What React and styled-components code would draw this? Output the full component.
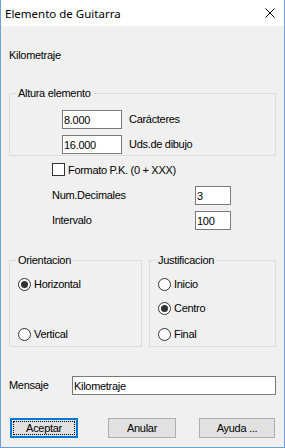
import React from 'react';
import styled, { createGlobalStyle } from 'styled-components';

const GlobalStyle = createGlobalStyle`
  html, body {
    margin: 0;
    padding: 0;
    background: #fff;
  }
  * {
    box-sizing: border-box;
  }
`;

const Window = styled.div`
  width: 285px;
  height: 448px;
  border: 1px solid #6f9fd8;
  border-top: none;
  background: #f0f0f0;
  display: flex;
  flex-direction: column;
  font-family: "Liberation Sans", Arial, sans-serif;
  font-size: 11px;
  letter-spacing: -0.3px;
  color: #000;
  overflow: hidden;
`;

const TitleBar = styled.div`
  height: 26px;
  flex-shrink: 0;
  background: #fff;
  display: flex;
  align-items: center;
  justify-content: space-between;
  padding: 0 9px 0 4px;
`;

const Title = styled.span`
  font-family: "Noto Sans", "Open Sans", sans-serif;
  font-size: 11.5px;
  letter-spacing: 0;
`;

const Body = styled.div`
  flex: 1;
  display: flex;
  flex-direction: column;
  padding: 23px 8px 0;
`;

const Label = styled.div`
  line-height: 13px;
  white-space: nowrap;
  margin-left: ${p => p.$ml || 0}px;
`;

const Group = styled.fieldset`
  margin: ${p => p.$mt || 0}px 0 0;
  padding: 0;
  border: 1px solid #dcdcdc;
  min-width: 0;
`;

const Legend = styled.legend`
  margin-left: 6px;
  padding: 0 2px;
  line-height: 14px;
`;

const GroupBody = styled.div`
  display: flex;
  flex-direction: column;
  padding: ${p => p.$pad};
`;

const FieldRow = styled.div`
  display: flex;
  align-items: center;
  gap: 7px;
  height: 19px;
  margin-top: ${p => p.$mt || 0}px;
`;

const TextBox = styled.input`
  width: ${p => p.$w}px;
  height: 19px;
  border: 1px solid #7a7a7a;
  background: #fff;
  padding: 0 1px;
  margin: 0;
  font: inherit;
  letter-spacing: inherit;
  color: #000;
  outline: none;
`;

const CheckRow = styled.label`
  display: flex;
  align-items: center;
  gap: 3px;
  height: 13px;
  margin: 7px 0 0 43px;
`;

const CheckBox = styled.span`
  width: 13px;
  height: 13px;
  border: 1px solid #333;
  background: #fff;
`;

const GridRow = styled.div`
  display: grid;
  grid-template-columns: ${p => p.$cols};
  align-items: center;
  height: 19px;
  margin-top: ${p => p.$mt || 0}px;
  padding-left: ${p => p.$pl || 0}px;
`;

const GroupPair = styled.div`
  display: grid;
  grid-template-columns: 133px 127px;
  gap: 7px;
  margin-top: 23px;
`;

const RadioRow = styled.label`
  display: flex;
  align-items: center;
  gap: 3px;
  height: 16px;
  margin-top: ${p => p.$mt || 0}px;
`;

const Radio = styled.span`
  width: 13px;
  height: 13px;
  border-radius: 50%;
  border: 1px solid #333;
  background: #fff;
  display: flex;
  align-items: center;
  justify-content: center;

  &::after {
    content: "";
    width: 7px;
    height: 7px;
    border-radius: 50%;
    background: ${p => (p.$checked ? '#333' : 'transparent')};
  }
`;

const ButtonRow = styled.div`
  display: flex;
  margin-top: 23px;
`;

const Button = styled.button`
  position: relative;
  width: ${p => p.$w}px;
  height: 20px;
  margin: 0 0 0 ${p => p.$ml}px;
  padding: 0;
  background: #e1e1e1;
  border: 1px solid ${p => (p.$default ? '#0078d7' : '#adadad')};
  box-shadow: ${p => (p.$default ? 'inset 0 0 0 1px #0078d7' : 'none')};
  font: inherit;
  letter-spacing: inherit;
  color: #000;

  &::after {
    content: "";
    display: ${p => (p.$default ? 'block' : 'none')};
    position: absolute;
    inset: 2px;
    border: 1px dotted #000;
  }
`;

const CloseIcon = () => (
  <svg width="10" height="10" viewBox="0 0 10 10">
    <path d="M0.5 0.5 L9.5 9.5 M9.5 0.5 L0.5 9.5" stroke="#000" strokeWidth="1" />
  </svg>
);

export default function App() {
  return (
    <>
      <GlobalStyle />
      <Window>
        <TitleBar>
          <Title>Elemento de Guitarra</Title>
          <CloseIcon />
        </TitleBar>
        <Body>
          <Label>Kilometraje</Label>

          <Group $mt={24}>
            <Legend>Altura elemento</Legend>
            <GroupBody $pad="10px 0 1px 52px">
              <FieldRow>
                <TextBox $w={60} defaultValue="8.000" />
                <Label>Carácteres</Label>
              </FieldRow>
              <FieldRow $mt={6}>
                <TextBox $w={60} defaultValue="16.000" />
                <Label>Uds.de dibujo</Label>
              </FieldRow>
            </GroupBody>
          </Group>

          <CheckRow>
            <CheckBox />
            <span>Formato P.K. (0 + XXX)</span>
          </CheckRow>

          <GridRow $cols="143px 36px" $pl={43} $mt={10}>
            <Label>Num.Decimales</Label>
            <TextBox $w={36} defaultValue="3" />
          </GridRow>
          <GridRow $cols="143px 36px" $pl={43} $mt={6}>
            <Label>Intervalo</Label>
            <TextBox $w={36} defaultValue="100" />
          </GridRow>

          <GroupPair>
            <Group>
              <Legend>Orientacion</Legend>
              <GroupBody $pad="0 0 4px 8px">
                <RadioRow $mt={9}>
                  <Radio $checked />
                  <span>Horizontal</span>
                </RadioRow>
                <RadioRow $mt={34}>
                  <Radio />
                  <span>Vertical</span>
                </RadioRow>
              </GroupBody>
            </Group>
            <Group>
              <Legend>Justificacion</Legend>
              <GroupBody $pad="0 0 4px 8px">
                <RadioRow $mt={9}>
                  <Radio />
                  <span>Inicio</span>
                </RadioRow>
                <RadioRow $mt={8}>
                  <Radio $checked />
                  <span>Centro</span>
                </RadioRow>
                <RadioRow $mt={10}>
                  <Radio />
                  <span>Final</span>
                </RadioRow>
              </GroupBody>
            </Group>
          </GroupPair>

          <GridRow $cols="63px 204px" $mt={29}>
            <Label>Mensaje</Label>
            <TextBox $w={204} defaultValue="Kilometraje" />
          </GridRow>

          <ButtonRow>
            <Button $default $w={68} $ml={1}>Aceptar</Button>
            <Button $w={68} $ml={30}>Anular</Button>
            <Button $w={76} $ml={23}>Ayuda ...</Button>
          </ButtonRow>
        </Body>
      </Window>
    </>
  );
}
